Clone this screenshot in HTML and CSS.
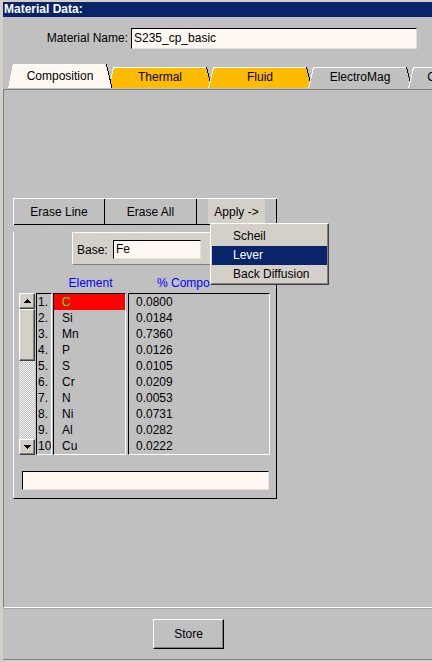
FILE: index.html
```html
<!DOCTYPE html>
<html>
<head>
<meta charset="utf-8">
<link rel="stylesheet" href="styles.css">
</head>
<body>
<div class="window">
  <div class="title">Material Data:</div>
  <div class="main">
    <div class="name-row">
      <div class="name-label">Material Name:</div>
      <div class="field name-field">S235_cp_basic</div>
    </div>
    <div class="tabs">
      <div class="tab selected">
        <svg class="tab-shape" width="104" height="24" viewBox="0 0 104 24" shape-rendering="crispEdges"><polygon points="0,24 5,0 99,0 104,24" fill="#fff8f0"/><path d="M0.5 24 L5.5 0.5 L98.5 0.5" stroke="#fff" fill="none"/><path d="M98.5 0.5 L104 24" stroke="#000" fill="none"/></svg>
        <span class="tab-label">Composition</span>
      </div>
      <div class="tab orange">
        <svg class="tab-shape" width="104" height="21" viewBox="0 0 104 21" shape-rendering="crispEdges"><polygon points="0,21 5,0 99,0 104,21" fill="#ffbb00"/><path d="M0.5 21 L5.5 0.5 L98.5 0.5" stroke="#fff" fill="none"/><path d="M98.5 0.5 L104 21" stroke="#000" fill="none"/></svg>
        <span class="tab-label">Thermal</span>
      </div>
      <div class="tab orange">
        <svg class="tab-shape" width="104" height="21" viewBox="0 0 104 21" shape-rendering="crispEdges"><polygon points="0,21 5,0 99,0 104,21" fill="#ffbb00"/><path d="M0.5 21 L5.5 0.5 L98.5 0.5" stroke="#fff" fill="none"/><path d="M98.5 0.5 L104 21" stroke="#000" fill="none"/></svg>
        <span class="tab-label">Fluid</span>
      </div>
      <div class="tab">
        <svg class="tab-shape" width="104" height="21" viewBox="0 0 104 21" shape-rendering="crispEdges"><polygon points="0,21 5,0 99,0 104,21" fill="#c0c0c0"/><path d="M0.5 21 L5.5 0.5 L98.5 0.5" stroke="#fff" fill="none"/><path d="M98.5 0.5 L104 21" stroke="#000" fill="none"/></svg>
        <span class="tab-label">ElectroMag</span>
      </div>
      <div class="tab">
        <svg class="tab-shape" width="104" height="21" viewBox="0 0 104 21" shape-rendering="crispEdges"><polygon points="0,21 5,0 99,0 104,21" fill="#c0c0c0"/><path d="M0.5 21 L5.5 0.5 L98.5 0.5" stroke="#fff" fill="none"/><path d="M98.5 0.5 L104 21" stroke="#000" fill="none"/></svg>
        <span class="tab-label">Conductivity</span>
      </div>
    </div>
    <div class="tab-content">
      <div class="editor">
        <div class="btn-bar">
          <div class="bar-btn erase-line">Erase Line</div>
          <div class="bar-btn erase-all">Erase All</div>
          <div class="bar-btn apply">
            <span class="apply-label">Apply -&gt;</span>
            <div class="popup">
              <div class="menu-item">Scheil</div>
              <div class="menu-item active">Lever</div>
              <div class="menu-item">Back Diffusion</div>
            </div>
          </div>
        </div>
        <div class="panel">
          <div class="base-box">
            <span class="base-label">Base:</span>
            <div class="field base-field">Fe</div>
          </div>
          <div class="headers">
            <div class="h-el">Element</div>
            <div class="h-comp">% Composition</div>
          </div>
          <div class="table">
            <div class="scrollbar">
              <div class="sb-btn"><svg width="7" height="4" viewBox="0 0 7 4" shape-rendering="crispEdges"><polygon points="0,4 3.5,0 7,4" fill="#000"/></svg></div>
              <div class="sb-thumb"></div>
              <div class="sb-track"></div>
              <div class="sb-btn"><svg width="7" height="4" viewBox="0 0 7 4" shape-rendering="crispEdges"><polygon points="0,0 7,0 3.5,4" fill="#000"/></svg></div>
            </div>
            <div class="col col-num">
              <div class="cell">1.</div><div class="cell">2.</div><div class="cell">3.</div><div class="cell">4.</div><div class="cell">5.</div><div class="cell">6.</div><div class="cell">7.</div><div class="cell">8.</div><div class="cell">9.</div><div class="cell">10</div>
            </div>
            <div class="col col-el">
              <div class="cell selected-cell">C</div><div class="cell">Si</div><div class="cell">Mn</div><div class="cell">P</div><div class="cell">S</div><div class="cell">Cr</div><div class="cell">N</div><div class="cell">Ni</div><div class="cell">Al</div><div class="cell">Cu</div>
            </div>
            <div class="col col-comp">
              <div class="cell">0.0800</div><div class="cell">0.0184</div><div class="cell">0.7360</div><div class="cell">0.0126</div><div class="cell">0.0105</div><div class="cell">0.0209</div><div class="cell">0.0053</div><div class="cell">0.0731</div><div class="cell">0.0282</div><div class="cell">0.0222</div>
            </div>
          </div>
          <div class="field status-field"></div>
        </div>
      </div>
    </div>
    <div class="footer">
      <div class="store">Store</div>
    </div>
  </div>
</div>
</body>
</html>
```
FILE: styles.css
```css
* { box-sizing: border-box; }
html, body { margin: 0; padding: 0; }
body {
  width: 432px;
  height: 662px;
  overflow: hidden;
  background: #d4d0c8;
  font-family: "Liberation Sans", Arial, sans-serif;
  font-size: 12px;
  color: #000;
}
.window {
  height: 662px;
  padding: 2px 0 2px 3px;
  display: flex;
  flex-direction: column;
}
.title {
  height: 15px;
  flex: none;
  background: #0a246a;
  color: #fff;
  font-weight: bold;
  line-height: 15px;
  padding-left: 1px;
}
.main {
  flex: 1;
  background: #c0c0c0;
  display: flex;
  flex-direction: column;
  overflow: hidden;
}
.name-row {
  display: flex;
  align-items: center;
  height: 20px;
  margin-top: 11px;
  flex: none;
}
.name-label {
  width: 125px;
  text-align: right;
}
.field {
  background: #fff8f0;
  border: 1px solid;
  border-color: #000 #e4e0d8 #e4e0d8 #000;
  line-height: 17px;
  padding-left: 2px;
  white-space: nowrap;
}
.name-field {
  margin-left: 3px;
  width: 286px;
  height: 21px;
  line-height: 19px;
}
.tabs {
  display: flex;
  height: 25px;
  margin-top: 16px;
  padding-left: 5px;
  flex: none;
}
.tab {
  position: relative;
  flex: none;
  width: 104px;
  height: 21px;
  margin-top: 3px;
  margin-left: -4px;
  line-height: 21px;
  text-align: center;
  white-space: nowrap;
}
.tab:first-child { margin-left: 0; }
.tab.selected {
  height: 24px;
  margin-top: 0;
  line-height: 24px;
  z-index: 2;
}
.tab-shape {
  position: absolute;
  left: 0;
  top: 0;
}
.tab-label { position: relative; }
.tab-content {
  height: 519px;
  flex: none;
  border-top: 1px solid #808080;
  border-left: 1px solid #808080;
  border-bottom: 1px solid #fff;
  padding: 108px 0 0 9px;
}
.editor { width: 264px; }
.btn-bar {
  display: flex;
  height: 27px;
  border-top: 1px solid #fff;
  border-left: 1px solid #fff;
}
.bar-btn {
  display: flex;
  align-items: center;
  justify-content: center;
  border-right: 1px solid #000;
  border-bottom: 1px solid #000;
  height: 100%;
}
.erase-line { width: 91px; }
.erase-all { width: 92px; }
.apply {
  width: 80px;
  position: relative;
  align-items: stretch;
}
.apply-label {
  display: flex;
  align-items: center;
  background: #d4d0c8;
  padding: 0 6px;
}
.popup {
  position: absolute;
  left: 13px;
  top: 24px;
  width: 119px;
  height: 62px;
  background: #d4d0c8;
  border: 1px solid;
  border-color: #fff #404040 #404040 #fff;
  box-shadow: inset -1px -1px 0 #808080;
  padding: 3px 1px 0 1px;
  z-index: 5;
}
.menu-item {
  height: 19px;
  line-height: 19px;
  padding-left: 21px;
  white-space: nowrap;
}
.menu-item.active {
  background: #0a246a;
  color: #fff;
}
.panel {
  border-left: 1px solid #fff;
  border-right: 1px solid #000;
  border-bottom: 1px solid #000;
  padding-bottom: 8px;
}
.base-box {
  display: flex;
  align-items: center;
  margin: 7px 0 0 58px;
  width: 139px;
  height: 33px;
  background: #d4d0c8;
  border: 1px solid;
  border-color: #fff #808080 #808080 #fff;
  padding: 2px 9px 0 4px;
}
.base-field {
  margin-left: auto;
  width: 88px;
  height: 19px;
}
.headers {
  display: flex;
  margin: 10px 0 0 39px;
  height: 16px;
  line-height: 16px;
  color: #0000ff;
}
.h-el { width: 75px; text-align: center; }
.h-comp {
  width: 82px;
  padding-left: 29px;
  white-space: nowrap;
  overflow: hidden;
}
.table {
  display: flex;
  margin: 2px 0 0 5px;
  height: 162px;
}
.scrollbar {
  width: 16px;
  display: flex;
  flex-direction: column;
  margin-right: 1px;
}
.sb-btn {
  height: 16px;
  flex: none;
  display: flex;
  align-items: center;
  justify-content: center;
  background: #d4d0c8;
  border: 1px solid;
  border-color: #fff #404040 #404040 #fff;
  box-shadow: inset -1px -1px 0 #808080;
}
.sb-thumb {
  height: 52px;
  flex: none;
  background: #d4d0c8;
  border: 1px solid;
  border-color: #fff #404040 #404040 #fff;
  box-shadow: inset -1px -1px 0 #808080;
}
.sb-track {
  flex: 1;
  background: repeating-conic-gradient(#c0c0c0 0 25%, #f4f4f4 0 50%) 0 0 / 2px 2px;
}
.col {
  border: 1px solid;
  border-color: #000 #fff #fff #000;
}
.col-num { width: 16px; margin-right: 1px; }
.col-el { width: 73px; margin-right: 2px; }
.col-comp { width: 142px; }
.cell {
  height: 16px;
  line-height: 16px;
  white-space: nowrap;
  overflow: hidden;
}
.col-num .cell { padding-left: 1px; }
.col-el .cell { padding-left: 8px; }
.col-comp .cell { padding-left: 7px; }
.selected-cell {
  background: #ff0000;
  color: #00ff00;
}
.status-field {
  margin: 16px 0 0 8px;
  width: 247px;
  height: 19px;
}
.footer {
  flex: 1;
  border-top: 1px solid #a8a8a8;
  border-bottom: 1px solid #808080;
  padding: 10px 0 0 150px;
}
.store {
  width: 71px;
  height: 30px;
  display: flex;
  align-items: center;
  justify-content: center;
  background: #c0c0c0;
  border: 1px solid;
  border-color: #fff #000 #000 #fff;
  box-shadow: inset -1px -1px 0 #808080;
}
```
